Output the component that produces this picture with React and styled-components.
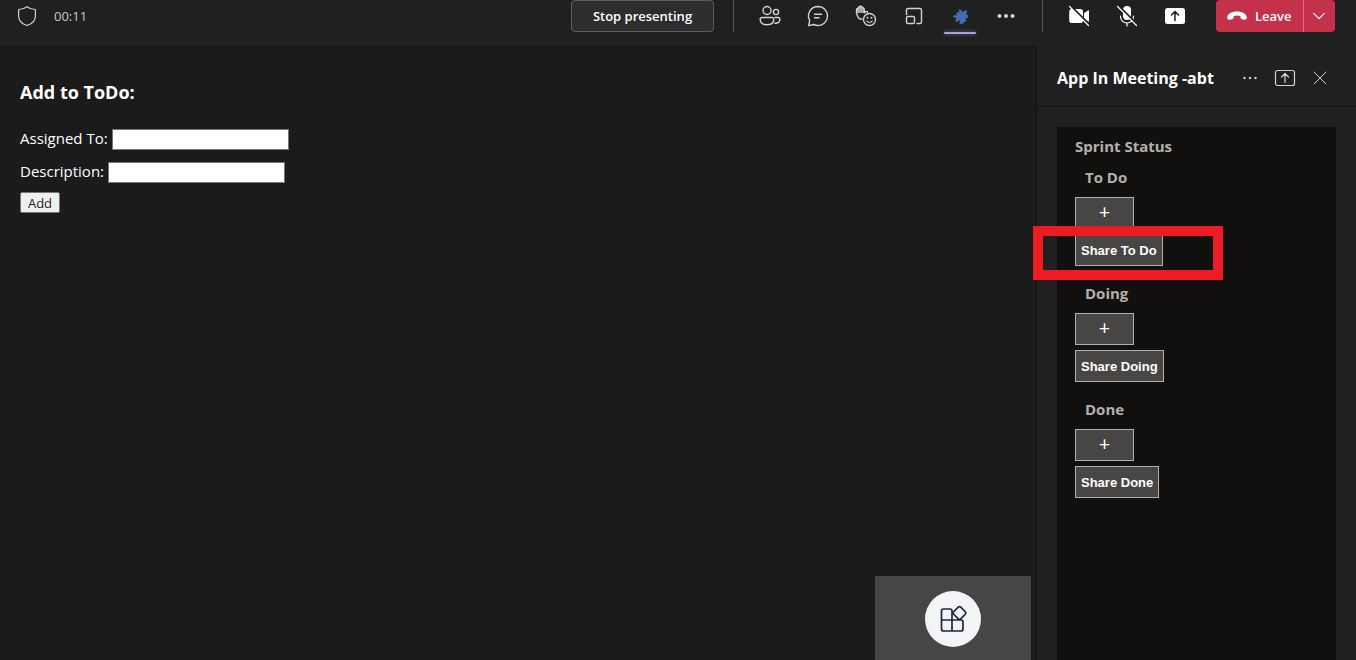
import React from "react";
import styled, { createGlobalStyle } from "styled-components";

const GlobalStyle = createGlobalStyle`
  * { box-sizing: border-box; }
  html, body, #root { height: 100%; }
  body {
    margin: 0;
    overflow: hidden;
    background: #1b1b1b;
    color: #fff;
    font-family: "Open Sans", "Noto Sans", sans-serif;
  }
  button { font-family: inherit; cursor: pointer; }
`;

const Page = styled.div`
  height: 100vh;
  display: flex;
  flex-direction: column;
`;

const TopBar = styled.header`
  flex: none;
  height: 46px;
  padding: 0 21px 14px 18px;
  display: flex;
  align-items: center;
  background: #202020;
  color: #d2d2d2;
  box-shadow: 0 1px 4px rgba(0, 0, 0, 0.3);
`;

const Timer = styled.time`
  margin-left: 16px;
  font-size: 13px;
  line-height: 20px;
  color: #c8c8c8;
`;

const Actions = styled.div`
  margin-left: auto;
  display: flex;
  align-items: center;
`;

const StopButton = styled.button`
  width: 143px;
  height: 32px;
  margin-right: 19px;
  padding: 0;
  border: 1px solid #5d5d5d;
  border-radius: 4px;
  background: #2d2d2d;
  color: #fff;
  font-size: 13px;
  font-weight: 600;
  line-height: 20px;
`;

const Separator = styled.span`
  width: 1px;
  height: 32px;
  background: #555;
`;

const Tools = styled.div`
  display: flex;
  gap: 16px;
  padding: 0 20px;
`;

const DeviceTools = styled(Tools)`
  padding-right: 25px;
`;

const IconButton = styled.button`
  display: flex;
  align-items: center;
  justify-content: center;
  width: 32px;
  height: 32px;
  padding: 0;
  border: 0;
  background: none;
  color: ${(p) => p.$color || "#d2d2d2"};
`;

const ActiveIconButton = styled(IconButton)`
  position: relative;
  margin: 0 -2px;
  &::after {
    content: "";
    position: absolute;
    left: 0;
    right: 0;
    top: 32px;
    height: 2px;
    border-radius: 1px;
    background: #a6a7dc;
    box-shadow: 0 0 4px #6264a7;
  }
`;

const LeaveGroup = styled.div`
  display: flex;
  height: 32px;
  border-radius: 4px;
  overflow: hidden;
  background: #c4314b;
`;

const LeaveButton = styled.button`
  display: flex;
  align-items: center;
  gap: 8px;
  width: 87px;
  padding: 0 0 0 11px;
  border: 0;
  background: none;
  color: #fff;
  font-size: 13px;
  font-weight: 600;
`;

const LeaveMenu = styled.button`
  display: flex;
  align-items: center;
  justify-content: center;
  width: 32px;
  padding: 0 1px 0 0;
  border: 0;
  border-left: 1px solid #e8677c;
  background: none;
  color: #fff;
`;

const Body = styled.div`
  flex: 1;
  min-height: 0;
  display: flex;
`;

const Stage = styled.main`
  position: relative;
  flex: 1;
  min-width: 0;
  padding: 32px 20px;
`;

const Title = styled.h1`
  margin: 0 0 20px;
  font-size: 18px;
  line-height: 28px;
  font-weight: 700;
`;

const Field = styled.div`
  display: flex;
  align-items: center;
  gap: 4px;
  height: 27px;
  margin-bottom: 6px;
`;

const FieldLabel = styled.label`
  padding-bottom: 4px;
  font-size: 15px;
  line-height: 20px;
`;

const TextInput = styled.input`
  width: 177px;
  height: 21px;
  padding: 1px 2px;
  border: 1px solid #767676;
  background: #fff;
  color: #000;
`;

const AddButton = styled.button`
  display: block;
  width: 40px;
  height: 21px;
  padding: 0;
  border: 1px solid #767676;
  border-radius: 2px;
  background: #efefef;
  color: #222;
  font-size: 13px;
  line-height: 18px;
`;

const Tile = styled.div`
  position: absolute;
  right: 5px;
  bottom: 0;
  display: flex;
  justify-content: center;
  width: 156px;
  height: 84px;
  padding-top: 15px;
  background: #484644;
`;

const Avatar = styled.span`
  display: flex;
  align-items: center;
  justify-content: center;
  width: 56px;
  height: 56px;
  border-radius: 50%;
  background: #f3f4f7;
  color: #1f2740;
`;

const Panel = styled.aside`
  flex: none;
  width: 320px;
  display: flex;
  flex-direction: column;
  border-left: 1px solid #111;
  background: #202020;
`;

const PanelHeader = styled.div`
  flex: none;
  display: flex;
  align-items: center;
  height: 61px;
  padding: 4px 20px 0;
  border-bottom: 1px solid #111;
`;

const PanelTitle = styled.h2`
  flex: 1;
  margin: 0;
  font-size: 16px;
  line-height: 20px;
  font-weight: 700;
  white-space: nowrap;
`;

const PanelTools = styled.div`
  display: flex;
  gap: 3px;
`;

const Board = styled.section`
  flex: 1;
  margin: 20px 20px 0;
  padding: 9px 18px;
  background: #11100f;
`;

const BoardTitle = styled.h3`
  margin: 0 0 10px;
  font-size: 15px;
  line-height: 21px;
  font-weight: 700;
  color: #b3b0ad;
`;

const Column = styled.div`
  position: relative;
  display: flex;
  flex-direction: column;
  align-items: flex-start;
  margin-bottom: 17px;
`;

const ColumnTitle = styled.h4`
  margin: 0 0 9px 10px;
  font-size: 15px;
  line-height: 21px;
  font-weight: 700;
  color: #b3b0ad;
`;

const BoardButton = styled.button`
  height: 32px;
  padding: 0 5px;
  border: 1px solid #b3b0ad;
  background: #484644;
  color: #fff;
  font-family: "Liberation Sans", sans-serif;
  font-size: 13px;
  font-weight: 700;
`;

const PlusButton = styled(BoardButton)`
  width: 59px;
  margin-bottom: 5px;
  padding-bottom: 3px;
  font-family: "Open Sans", "Noto Sans", sans-serif;
  font-size: 20px;
  line-height: 24px;
  font-weight: 400;
`;

const Highlight = styled.span`
  position: absolute;
  left: -42px;
  top: 59px;
  width: 190px;
  height: 54px;
  border: 10px solid #ed1c24;
  pointer-events: none;
`;

const Icon = ({ size = 24, children, ...rest }) => (
  <svg width={size} height={size} viewBox="0 0 24 24" fill="none" stroke="currentColor"
    strokeWidth="1.2" strokeLinecap="round" strokeLinejoin="round" aria-hidden="true" {...rest}>
    {children}
  </svg>
);

const Shield = () => (
  <Icon size={20} viewBox="0 0 20 20">
    <path d="M9 .7C11.600 2.600 14.300 3.400 17.400 3.500V10C17.400 14.600 13.900 18 9 19.500C4.100 18 .6 14.600 .6 10V3.500C3.700 3.400 6.400 2.600 9 .7Z" />
  </Icon>
);
const People = () => (
  <Icon strokeWidth="1.400">
    <circle cx="9" cy="6.500" r="4" /><circle cx="18" cy="8" r="2.600" />
    <path d="M4 13.500h10a1.800 1.800 0 0 1 1.800 1.800c0 3.600-2.600 5.500-6.800 5.500s-6.800-1.900-6.800-5.500A1.800 1.800 0 0 1 4 13.500ZM17 13.500h3.200a1.700 1.700 0 0 1 1.700 1.800c0 2.800-1.800 4.200-5.100 4" />
  </Icon>
);
const Chat = () => (
  <Icon strokeWidth="1.400">
    <path d="M12 2.500a9.500 9.500 0 1 1-4.300 18L2.600 21.600l1.100-5A9.500 9.500 0 0 1 12 2.500ZM8.500 10.200h7M8.500 13.800h4.500" />
  </Icon>
);
const Reactions = () => (
  <Icon strokeWidth="1.400">
    <path d="M2.700 9V4.800L4.500 3.500 6.500 2.300 8.700 3.200 10.300 4.500V9Z" fill="currentColor" stroke="none" opacity=".75" />
    <path d="M8 15.300C5.600 15.300 4.300 14 3.600 12.200L2.500 9V5.500Q2.700 4.200 4.300 4.300 4.500 2.500 6.300 2.300 8.200 2.200 8.500 3.700 10.300 3.800 10.300 5.500V8.800L12 7.600Q13.300 7.200 13.600 8.300" />
    <circle cx="15.500" cy="15.500" r="6" />
    <path d="M12.800 17.200c1.500 1.700 3.900 1.700 5.400 0" strokeWidth="1.200" />
    <path d="M13.500 13.700v.1M17.500 13.700v.1" strokeWidth="2" />
  </Icon>
);
const Rooms = () => (
  <Icon strokeWidth="1.400">
    <path d="M4.500 10.500V6A1.500 1.500 0 0 1 6 4.500h12A1.500 1.500 0 0 1 19.500 6v12a1.500 1.500 0 0 1-1.500 1.500h-3" />
    <rect x="4.500" y="12.500" width="8" height="7" rx="1.300" />
  </Icon>
);
const Puzzle = () => (
  <Icon fill="currentColor" stroke="none">
    <path d="M8.300 8.200 11 8.400Q11.500 7.700 10.800 6.900 10.300 5.500 11.700 5.200 13.200 5.300 13.300 6.600 13.600 7.700 14.600 7.500L18.600 6 19 8.500Q18.200 9.800 18.600 10.300L20.500 11.700 20 14 17.800 14.200Q17.200 14.600 17.600 15.300L18.400 17 15.900 18.600 13.700 20.600 11.400 19.300Q10.700 18.600 11.600 17.900 12.400 16.900 11.300 16.300 10.300 16 9.900 17.200L8.200 18.200 7.200 16.500 8.400 14.500Q8.200 13.300 6.900 13.600 5.300 14 5 12.600 5.100 11 6.600 11.200L8.200 11.600Q9.100 11.300 8.600 10.200Z" />
  </Icon>
);
const Dots = ({ r = 2, gap = 6.5 }) => (
  <Icon fill="currentColor" stroke="none">
    <circle cx={12 - gap} cy="12" r={r} /><circle cx="12" cy="12" r={r} /><circle cx={12 + gap} cy="12" r={r} />
  </Icon>
);
const CameraOff = () => (
  <Icon>
    <path d="M5 5h8.200A2.800 2.800 0 0 1 16 7.800v8.400a2.800 2.800 0 0 1-2.800 2.800H5a2.800 2.800 0 0 1-2.800-2.800V7.800A2.800 2.800 0 0 1 5 5ZM17 9.200l4-2.800q1-.5 1 .5v10.200q0 1-1 .5l-4-2.800Z" fill="currentColor" stroke="none" />
    <path d="M3.500 1.700 22.800 21" stroke="#202020" strokeWidth="2" /><path d="m2.500 2.500 19 19" />
  </Icon>
);
const MicOff = () => (
  <Icon>
    <rect x="8" y="2" width="8" height="14" rx="4" fill="currentColor" stroke="none" />
    <path d="M5.500 12v.5a6.500 6.500 0 0 0 13 0V12M12 19v3" />
    <path d="M3.500 1.700 22.800 21" stroke="#202020" strokeWidth="2" /><path d="m2.500 2.500 19 19" />
  </Icon>
);
const ShareSolid = () => (
  <Icon>
    <rect x="2" y="4" width="20" height="16" rx="2.500" fill="currentColor" stroke="none" />
    <path d="M12 16.500v-9M8.500 11 12 7.500l3.500 3.500" stroke="#202020" strokeWidth="1.500" />
  </Icon>
);
const HangUp = () => (
  <Icon size={20} viewBox="0 0 20 20">
    <path d="M10 5.500c5.500 0 9.300 2.300 9.700 5.600.2 2-.7 2.800-2.200 2.600l-2.600-.5c-1-.2-1.300-.8-1.400-1.700l-.2-1.400c-2-.8-4.600-.8-6.600 0l-.2 1.400c-.1.900-.4 1.500-1.400 1.700l-2.600.5C1 13.900.1 13.100.3 11.100.7 7.800 4.500 5.500 10 5.500Z" fill="currentColor" stroke="none" />
  </Icon>
);
const Chevron = () => <Icon size={16}><path d="m4 8 8 8 8-8" strokeWidth="1.700" /></Icon>;
const ShareOutline = () => (
  <Icon strokeWidth="1.200">
    <rect x="2.500" y="4.500" width="19" height="15" rx="2" /><path d="M12 16.500v-9M8.500 11 12 7.500l3.500 3.500" />
  </Icon>
);
const Close = () => <Icon strokeWidth="1"><path d="m6 6 12 12M18 6 6 18" /></Icon>;
const Apps = () => (
  <Icon size={32} viewBox="0 0 32 32" strokeWidth="1.700">
    <path d="M14.500 28H6.500A2 2 0 0 1 4.500 26V8a2 2 0 0 1 2-2h6.500a2 2 0 0 1 2 2v20M4.500 17H24a2 2 0 0 1 2 2v7a2 2 0 0 1-2 2h-9.500" />
    <rect x="17.500" y="5" width="10" height="10" rx="1.800" transform="rotate(45 22.500 10)" />
  </Icon>
);

const columns = [
  { name: "To Do", highlighted: true },
  { name: "Doing" },
  { name: "Done" },
];

export default function App() {
  return (
    <Page>
      <GlobalStyle />
      <TopBar>
        <Shield />
        <Timer>00:11</Timer>
        <Actions>
          <StopButton>Stop presenting</StopButton>
          <Separator />
          <Tools>
            <IconButton aria-label="People"><People /></IconButton>
            <IconButton aria-label="Chat"><Chat /></IconButton>
            <IconButton aria-label="Reactions"><Reactions /></IconButton>
            <IconButton aria-label="Rooms"><Rooms /></IconButton>
            <ActiveIconButton aria-label="App" $color="#3f6db0"><Puzzle /></ActiveIconButton>
            <IconButton aria-label="More"><Dots /></IconButton>
          </Tools>
          <Separator />
          <DeviceTools>
            <IconButton aria-label="Turn camera on" $color="#fff"><CameraOff /></IconButton>
            <IconButton aria-label="Unmute" $color="#fff"><MicOff /></IconButton>
            <IconButton aria-label="Share" $color="#fff"><ShareSolid /></IconButton>
          </DeviceTools>
          <LeaveGroup>
            <LeaveButton><HangUp />Leave</LeaveButton>
            <LeaveMenu aria-label="Leave options"><Chevron /></LeaveMenu>
          </LeaveGroup>
        </Actions>
      </TopBar>
      <Body>
        <Stage>
          <Title>Add to ToDo:</Title>
          <Field>
            <FieldLabel htmlFor="assigned">Assigned To:</FieldLabel>
            <TextInput id="assigned" />
          </Field>
          <Field>
            <FieldLabel htmlFor="description">Description:</FieldLabel>
            <TextInput id="description" />
          </Field>
          <AddButton>Add</AddButton>
          <Tile><Avatar><Apps /></Avatar></Tile>
        </Stage>
        <Panel>
          <PanelHeader>
            <PanelTitle>App In Meeting -abt</PanelTitle>
            <PanelTools>
              <IconButton aria-label="More options"><Dots r={1.2} gap={5.5} /></IconButton>
              <IconButton aria-label="Share to stage"><ShareOutline /></IconButton>
              <IconButton aria-label="Close"><Close /></IconButton>
            </PanelTools>
          </PanelHeader>
          <Board>
            <BoardTitle>Sprint Status</BoardTitle>
            {columns.map(({ name, highlighted }) => (
              <Column key={name}>
                <ColumnTitle>{name}</ColumnTitle>
                <PlusButton aria-label={`Add to ${name}`}>+</PlusButton>
                <BoardButton>Share {name}</BoardButton>
                {highlighted && <Highlight />}
              </Column>
            ))}
          </Board>
        </Panel>
      </Body>
    </Page>
  );
}
